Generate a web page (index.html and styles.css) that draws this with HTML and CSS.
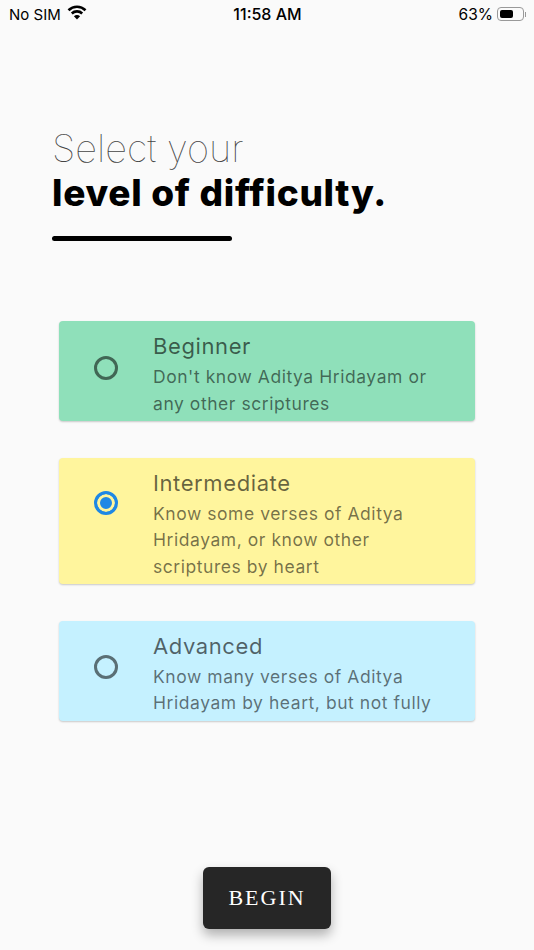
FILE: index.html
```html
<!DOCTYPE html>
<html lang="en">

<head>
    <meta charset="utf-8">
    <meta name="viewport" content="width=device-width, initial-scale=1.0">
    <title>Select your level of difficulty</title>
    <link rel="stylesheet" href="styles.css">
</head>

<body>
    <div class="status-bar">
        <div class="status-left">
            <span>No SIM</span>
            <svg class="wifi" width="20" height="15" viewBox="0 0 20 15">
                <path d="M1.500 5.200C6.300.6 13.700.6 18.500 5.200" fill="none" stroke="#000" stroke-width="2.600"/>
                <path d="M4.800 8.500C7.700 5.700 12.300 5.700 15.200 8.500" fill="none" stroke="#000" stroke-width="2.600"/>
                <path d="M6.900 11.200C8.700 9.500 11.300 9.500 13.100 11.200L10 14.600Z" fill="#000"/>
            </svg>
        </div>
        <div class="status-time">11:58 AM</div>
        <div class="status-right">
            <span>63%</span>
            <div class="battery"><div class="battery-level"></div></div>
            <div class="battery-cap"></div>
        </div>
    </div>

    <div class="heading">
        <h1>Select your</h1>
        <h2>level of difficulty.</h2>
        <div class="rule"></div>
    </div>

    <div class="levels">
        <div class="level green">
            <div class="radio"></div>
            <div class="level-text">
                <h3>Beginner</h3>
                <p>Don't know Aditya Hridayam or any other scriptures</p>
            </div>
        </div>
        <div class="level yellow">
            <div class="radio checked"></div>
            <div class="level-text">
                <h3>Intermediate</h3>
                <p>Know some verses of Aditya Hridayam, or know other scriptures by heart</p>
            </div>
        </div>
        <div class="level blue">
            <div class="radio"></div>
            <div class="level-text">
                <h3>Advanced</h3>
                <p>Know many verses of Aditya Hridayam by heart, but not fully</p>
            </div>
        </div>
    </div>

    <div class="footer">
        <button>BEGIN</button>
    </div>
</body>

</html>
```

FILE: styles.css
```css
* {
    margin: 0;
    padding: 0;
    box-sizing: border-box;
}

body {
    width: 100%;
    height: 100vh;
    background: #FAFAFA;
    display: flex;
    flex-direction: column;
    font-family: "Inter", sans-serif;
    overflow: hidden;
}

.status-bar {
    height: 28px;
    padding: 0 8px 0 9px;
    display: flex;
    justify-content: space-between;
    align-items: center;
    font-family: "Inter", sans-serif;
    font-size: 15px;
    color: #000;
}

.status-left {
    width: 170px;
    display: flex;
    align-items: center;
    gap: 6px;
}

.wifi {
    margin-top: -3px;
}

.status-time {
    font-size: 16px;
    font-weight: 500;
}

.status-right {
    width: 170px;
    display: flex;
    justify-content: flex-end;
    align-items: center;
    font-size: 15.500px;
}

.battery {
    width: 27px;
    height: 14px;
    margin-left: 4px;
    padding: 2px;
    border: 1px solid #999;
    border-radius: 4px;
}

.battery-level {
    width: 63%;
    height: 100%;
    background: #000;
    border-radius: 2px;
}

.battery-cap {
    width: 1px;
    height: 5px;
    margin-left: 1px;
    background: #999;
}

.heading {
    padding: 98px 52px 0;
}

h1 {
    font-size: 38px;
    line-height: 44px;
    font-weight: 100;
    color: #444;
}

h2 {
    font-size: 37px;
    line-height: 46px;
    font-weight: 800;
    letter-spacing: .7px;
    color: #000;
}

.rule {
    width: 180px;
    height: 5px;
    margin-top: 20px;
    background: #000;
    border-radius: 3px;
}

.levels {
    padding: 80px 59px 0;
    display: flex;
    flex-direction: column;
    gap: 36.600px;
}

.level {
    padding: 11px 30px 3.800px 35px;
    display: flex;
    border-radius: 4px;
    box-shadow: 0 1px 2px rgba(0, 0, 0, .2);
}

.green {
    background: #8FE0BA;
}

.yellow {
    background: #FFF59D;
}

.blue {
    background: #C5F1FF;
}

.radio {
    flex: none;
    width: 24px;
    height: 24px;
    margin-top: 24px;
    margin-right: 35px;
    border: 3px solid rgba(0, 0, 0, .54);
    border-radius: 50%;
}

.radio.checked {
    margin-top: 22px;
    border-color: #1E88E5;
    background: #1E88E5;
    box-shadow: inset 0 0 0 3px #FFF59D;
}

.blue .radio {
    margin-top: 23px;
}

h3 {
    font-size: 22px;
    line-height: 28px;
    font-weight: 400;
    letter-spacing: .6px;
    color: rgba(0, 0, 0, .6);
}

p {
    margin-top: 4px;
    font-size: 17.500px;
    line-height: 26.600px;
    letter-spacing: .55px;
    color: rgba(0, 0, 0, .55);
}

.footer {
    flex: 1;
    display: flex;
    justify-content: center;
    align-items: flex-end;
    padding-bottom: 21px;
}

button {
    width: 128px;
    height: 62px;
    border: none;
    border-radius: 6px;
    background: #262626;
    color: #FFFFFF;
    font-family: "Liberation Serif", serif;
    font-size: 22px;
    letter-spacing: 2px;
    box-shadow: 0 6px 12px rgba(0, 0, 0, .3);
}
```
